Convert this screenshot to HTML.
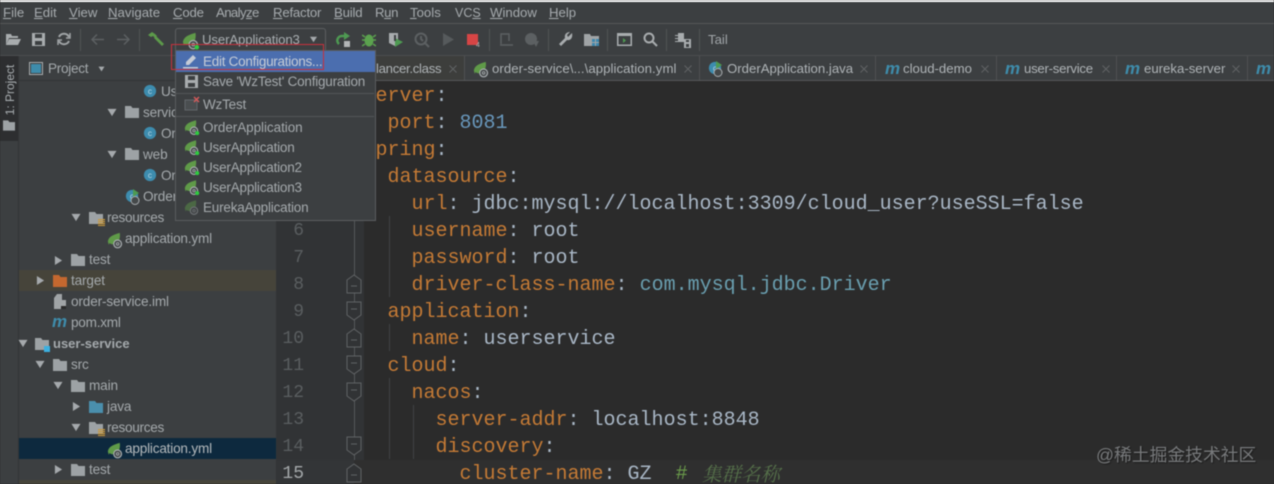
<!DOCTYPE html>
<html><head><meta charset="utf-8">
<style>
html,body{margin:0;padding:0;background:#2b2b2b}
#p{position:relative;width:1274px;height:484px;overflow:hidden;background:#2b2b2b;font-family:"Liberation Sans","Noto Sans CJK SC",sans-serif;font-size:13.5px;color:#a9b1b6;filter:blur(.45px)}
#p div,#p svg{position:absolute}
.t{white-space:nowrap;line-height:20px;height:20px}
.m{font-size:13.2px;color:#a6abae;top:3px}
.m u{text-decoration:underline;text-underline-offset:1px}
.tab{font-size:13.2px;color:#aeb3b6;top:59px}
.r{font-size:13.6px;color:#a4a9ac;margin-top:1px;letter-spacing:-.15px}
.d{font-size:13.5px;color:#a4a9ac;margin-top:1px;letter-spacing:-.2px}
.c{font-family:"Liberation Mono","Noto Sans CJK SC",monospace;font-size:20px;line-height:27px;height:27px;white-space:pre;color:#c47a35;left:363.5px;margin-top:2px}
.c b{font-weight:400;color:#a9b7c6}
.n{font-family:"Liberation Mono",monospace;font-size:18px;line-height:27px;height:27px;color:#5a5e60;text-align:right;width:28px;left:276px;margin-top:2px}
.v{background:#3f4244;width:1px}
.sep{background:#515354;width:1px;top:29px;height:22px}
.ln{background:#535557;height:1px}
</style></head><body>
<div id="p">
<svg width="0" height="0" style="left:0;top:0"><defs>
<symbol id="sp" viewBox="0 0 20 20"><path d="M1 11C2 5 8 3 15 1c1 6-1 12-6 13-3 1-5 0-6-1l-1 2z" fill="#5f9a48"/><circle cx="12.5" cy="14" r="4.6" fill="#45494a" stroke="#a8adb0" stroke-width="1.4"/><circle cx="12.5" cy="14" r="1.5" fill="none" stroke="#a8adb0" stroke-width="1"/></symbol>
<symbol id="spg" viewBox="0 0 20 20"><use href="#sp" width="20" height="20"/><circle cx="16.5" cy="17" r="2.5" fill="#2ecb3f"/></symbol>
<symbol id="f" viewBox="0 0 14 12"><path d="M0 0h6l1.500 2H14v10H0z" fill="#9da2a5"/></symbol>
<symbol id="cl" viewBox="0 0 16 16"><circle cx="8" cy="8" r="7" fill="#3d8cae"/><text x="8" y="11.500" font-size="9.500" text-anchor="middle" fill="#b4d4e4" font-family="Liberation Sans">c</text></symbol>
<symbol id="mv" viewBox="0 0 16 12"><text x="0" y="11" font-size="17" font-style="italic" font-weight="700" fill="#3e8cab" font-family="Liberation Sans">m</text></symbol>
<symbol id="dn" viewBox="0 0 10 10"><path d="M0 1h10L5 9z" fill="#a5a9ac"/></symbol>
<symbol id="rt" viewBox="0 0 10 10"><path d="M1 0v10l8-5z" fill="#a5a9ac"/></symbol>
<symbol id="x" viewBox="0 0 8 8"><path d="M.5.500l7 7M7.500.500l-7 7" stroke="#606365" stroke-width="1" fill="none"/></symbol>
</defs></svg>

<!-- chrome -->
<div style="left:0;top:0;width:1274px;height:2px;background:#fff"></div>
<div style="left:0;top:2px;width:1274px;height:21px;background:#3c3f41"></div>
<div style="left:0;top:23px;width:1274px;height:1px;background:#555758"></div>
<div style="left:0;top:24px;width:1274px;height:32px;background:#3c3f41"></div>
<div style="left:0;top:55px;width:1274px;height:1px;background:#4b4d4f"></div>
<div style="left:0;top:56px;width:1274px;height:24px;background:#3c3f41"></div>
<div style="left:276px;top:80px;width:998px;height:1px;background:#555758"></div>

<!-- menu -->
<div class="t m" style="left:3px"><u>F</u>ile</div>
<div class="t m" style="left:34px"><u>E</u>dit</div>
<div class="t m" style="left:69px"><u>V</u>iew</div>
<div class="t m" style="left:108px"><u>N</u>avigate</div>
<div class="t m" style="left:173px;letter-spacing:-.2px"><u>C</u>ode</div>
<div class="t m" style="left:216px;letter-spacing:-.6px">Analy<u>z</u>e</div>
<div class="t m" style="left:273px;letter-spacing:-.2px"><u>R</u>efactor</div>
<div class="t m" style="left:334px;letter-spacing:-.2px"><u>B</u>uild</div>
<div class="t m" style="left:375px;letter-spacing:-.4px">R<u>u</u>n</div>
<div class="t m" style="left:410px"><u>T</u>ools</div>
<div class="t m" style="left:455px;font-size:12.5px">VC<u>S</u></div>
<div class="t m" style="left:490px"><u>W</u>indow</div>
<div class="t m" style="left:549px"><u>H</u>elp</div>

<!-- toolbar -->
<svg style="left:5px;top:33px" width="16" height="13" viewBox="0 0 16 13"><path d="M1 1h5l1 2h6v2H4L1 12zM4 6h12l-3 6H1z" fill="#a8acae"/></svg>
<svg style="left:32px;top:33px" width="13" height="13" viewBox="0 0 13 13"><path d="M0 0h13v13H0z" fill="#a8acae"/><path d="M3 1h7v4H3zM3 8h7v4H3z" fill="#3c3f41"/></svg>
<svg style="left:57px;top:32px" width="14" height="14" viewBox="0 0 14 14" fill="none" stroke="#a0a4a6" stroke-width="2"><path d="M12 5A5.500 5.500 0 0 0 2 5M2 9a5.500 5.500 0 0 0 10 0"/><path d="M13 1v5H9M1 13V8h4" stroke-width="1.500"/></svg>
<div class="sep" style="left:80px"></div>
<svg style="left:90px;top:33px" width="14" height="13" viewBox="0 0 14 13" fill="none" stroke="#5c6062" stroke-width="1.500"><path d="M14 6.500H2M7 1.500l-5 5 5 5"/></svg>
<svg style="left:117px;top:33px" width="14" height="13" viewBox="0 0 14 13" fill="none" stroke="#5c6062" stroke-width="1.500"><path d="M0 6.500h12M7 1.500l5 5-5 5"/></svg>
<div class="sep" style="left:139px"></div>
<svg style="left:148px;top:31px" width="16" height="16" viewBox="0 0 16 16"><path d="M0 4l4-3 3 2 2 2-2 2-2-2-2 1zM6 7l2-2 8 8-2 2z" fill="#5c9a4a"/></svg>
<div style="left:175px;top:28px;width:149px;height:22px;border:1px solid #5c5e60;border-radius:3px"></div>
<svg style="left:182px;top:32px" width="18" height="18"><use href="#spg" width="18" height="18"/></svg>
<div class="t" style="left:202px;top:30px;font-size:13.2px;color:#a8adb0;letter-spacing:-.12px">UserApplication3</div>
<svg style="left:309px;top:36px" width="9" height="7"><use href="#dn" width="9" height="7"/></svg>
<svg style="left:336px;top:32px" width="15" height="16" viewBox="0 0 15 16" fill="none"><path d="M8 4H6a4.500 4.500 0 0 0-3 8" stroke="#4e9a52" stroke-width="2.500"/><path d="M8 0l6 4-6 4z" fill="#4e9a52"/><path d="M8 9h6v6H8z" fill="#b2b5b7"/></svg>
<svg style="left:362px;top:32px" width="14" height="15" viewBox="0 0 14 15" fill="#5ba24e"><ellipse cx="7" cy="8.500" rx="4.500" ry="6"/><path d="M0 3l3 2M14 3l-3 2M0 8h3M14 8h-3M0 14l3-2M14 14l-3-2" stroke="#5ba24e" stroke-width="1.500"/></svg>
<svg style="left:388px;top:32px" width="16" height="16" viewBox="0 0 16 16"><path d="M1 1h9v8l-3 5-6-3z" fill="#a8acae"/><path d="M7 6l8 4-8 5z" fill="#4e9a52"/><path d="M6 3h2v6H6z" fill="#3c3f41"/></svg>
<svg style="left:414px;top:32px" width="16" height="16" viewBox="0 0 16 16" fill="none" stroke="#5c6062" stroke-width="2"><circle cx="7" cy="7" r="5.500"/><path d="M7 4v3l2 2M10 10l5 5"/></svg>
<svg style="left:443px;top:33px" width="11" height="13"><path d="M0 0v13l11-6.500z" fill="#565a5c"/></svg>
<svg style="left:467px;top:33px" width="13" height="15"><path d="M0 1h11v11H0z" fill="#d64545"/><text x="9" y="14" font-size="7" fill="#b0b3b5" font-family="Liberation Sans">4</text></svg>
<div class="sep" style="left:489px"></div>
<svg style="left:499px;top:33px" width="15" height="14" fill="none" stroke="#5c6062" stroke-width="1.500"><path d="M2 11V1h8v7M1 12h13"/></svg>
<svg style="left:524px;top:32px" width="16" height="16"><circle cx="7" cy="7" r="6" fill="#5c6062"/><path d="M9 9h6l-3 6z" fill="#5c6062"/></svg>
<div class="sep" style="left:548px"></div>
<svg style="left:558px;top:32px" width="15" height="15" viewBox="0 0 15 15"><path d="M14 1l-4 4-1-2 3-3C9 0 6 2 7 6L1 12l2 2 6-6c4 1 6-3 5-7z" fill="#a8acae"/></svg>
<svg style="left:584px;top:34px" width="15" height="12" viewBox="0 0 15 12"><path d="M0 0h6l1 2h8v10H0z" fill="#a0a4a6"/><path d="M8 5h3v3H8zM12 5h3v3h-3zM8 9h3v3H8zM12 9h3v3h-3z" fill="#3d87ad"/></svg>
<div class="sep" style="left:607px"></div>
<svg style="left:617px;top:33px" width="15" height="13" fill="none"><path d="M.75.75h13.500v11.500H.75z" stroke="#a8acae" stroke-width="1.500"/><path d="M1 1h13v2H1z" fill="#a8acae"/><path d="M6 5l3 2.500L6 10z" fill="#4e9a52"/></svg>
<svg style="left:643px;top:32px" width="15" height="15" fill="none" stroke="#a8acae" stroke-width="2"><circle cx="6" cy="6" r="4.500"/><path d="M9.500 9.500L14 14"/></svg>
<div class="sep" style="left:666px"></div>
<svg style="left:675px;top:33px" width="17" height="15" viewBox="0 0 17 15"><path d="M3 0h6v9H3zM0 2h3v1H0zM0 5h3v1H0zM0 8h3v1H0z" fill="#a8acae"/><path d="M9 6h7v9H9z" fill="#a8acae"/><path d="M11 7h3v2h-3zM11 11h3v3h-3z" fill="#3c3f41"/></svg>
<div class="sep" style="left:699px"></div>
<div class="t" style="left:708px;top:30px;font-size:13.2px;color:#a0a5a8">Tail</div>

<!-- tabs -->
<div class="v" style="left:464px;top:56px;height:24px;background:#4f5153"></div>
<div style="left:375px;top:56px;width:89px;height:24px;background:#3d3e3c"></div>
<div class="t tab" style="left:376px;letter-spacing:-.3px">lancer.class</div>
<svg style="left:449px;top:65px" width="8" height="8"><use href="#x" width="8" height="8"/></svg>
<svg style="left:473px;top:61px" width="17" height="17"><use href="#sp" width="17" height="17"/></svg>
<div class="t tab" style="left:492px;letter-spacing:.06px">order-service\...\application.yml</div>
<svg style="left:684px;top:65px" width="8" height="8"><use href="#x" width="8" height="8"/></svg>
<div class="v" style="left:699px;top:56px;height:24px;background:#4f5153"></div>
<svg style="left:708px;top:61px" width="16" height="16" viewBox="0 0 16 16"><use href="#cl" width="14" height="14"/><path d="M8 0l6 4-6 4z" fill="#4e9a52"/><circle cx="10" cy="11.500" r="4" fill="#45494a" stroke="#a8adb0"/></svg>
<div class="t tab" style="left:727px">OrderApplication.java</div>
<svg style="left:860px;top:65px" width="8" height="8"><use href="#x" width="8" height="8"/></svg>
<div class="v" style="left:875px;top:56px;height:24px;background:#4f5153"></div>
<svg style="left:885px;top:63px" width="16" height="12"><use href="#mv" width="16" height="12"/></svg>
<div class="t tab" style="left:903px">cloud-demo</div>
<svg style="left:981px;top:65px" width="8" height="8"><use href="#x" width="8" height="8"/></svg>
<div class="v" style="left:996px;top:56px;height:24px;background:#4f5153"></div>
<svg style="left:1005px;top:63px" width="16" height="12"><use href="#mv" width="16" height="12"/></svg>
<div class="t tab" style="left:1024px;letter-spacing:-.25px">user-service</div>
<svg style="left:1102px;top:65px" width="8" height="8"><use href="#x" width="8" height="8"/></svg>
<div class="v" style="left:1116px;top:56px;height:24px;background:#4f5153"></div>
<svg style="left:1125px;top:63px" width="16" height="12"><use href="#mv" width="16" height="12"/></svg>
<div class="t tab" style="left:1144px">eureka-server</div>
<svg style="left:1232px;top:65px" width="8" height="8"><use href="#x" width="8" height="8"/></svg>
<div class="v" style="left:1247px;top:56px;height:24px;background:#4f5153"></div>
<svg style="left:1256px;top:63px" width="16" height="12"><use href="#mv" width="16" height="12"/></svg>

<!-- left stripe -->
<div style="left:0;top:56px;width:19px;height:428px;background:#3c3f41"></div>
<div style="left:0;top:56px;width:18px;height:85px;background:#2d2e30"></div>
<div class="t" style="left:-16px;top:80px;width:52px;font-size:12px;color:#a8adb0;transform:rotate(-90deg);text-align:center">1: Project</div>
<svg style="left:3px;top:120px" width="12" height="11"><use href="#f" width="12" height="11"/></svg>
<div style="left:18px;top:56px;width:1px;height:428px;background:#323436"></div>

<!-- project tree -->
<div style="left:19px;top:56px;width:257px;height:428px;background:#3c3f41"></div>
<div style="left:19px;top:80px;width:257px;height:1px;background:#323436"></div>
<svg style="left:29px;top:62px" width="14" height="13" fill="none"><path d="M.5.500h13v12H.5z" stroke="#a8acae"/><path d="M2 2h10v9H2z" fill="#3e8cab"/></svg>
<div class="t r" style="left:48px;top:58px;letter-spacing:-.3px">Project</div>
<svg style="left:97px;top:66px" width="9" height="6"><use href="#dn" width="9" height="6"/></svg>
<div style="left:19px;top:270px;width:257px;height:21px;background:#46443a"></div>
<div style="left:19px;top:438px;width:257px;height:21px;background:#0d293e"></div>
<div style="left:19px;top:480px;width:257px;height:4px;background:#46443a"></div>

<svg style="left:143px;top:84px" width="14" height="14"><use href="#cl" width="14" height="14"/></svg>
<div class="t r" style="left:161px;top:81px">Us</div>
<svg style="left:107px;top:108px" width="10" height="9"><use href="#dn" width="10" height="9"/></svg>
<svg style="left:125px;top:106px" width="14" height="12"><use href="#f" width="14" height="12"/></svg>
<div class="t r" style="left:143px;top:102px">service</div>
<svg style="left:143px;top:126px" width="14" height="14"><use href="#cl" width="14" height="14"/></svg>
<div class="t r" style="left:161px;top:123px">Or</div>
<svg style="left:107px;top:150px" width="10" height="9"><use href="#dn" width="10" height="9"/></svg>
<svg style="left:125px;top:148px" width="14" height="12"><use href="#f" width="14" height="12"/></svg>
<div class="t r" style="left:143px;top:144px">web</div>
<svg style="left:143px;top:168px" width="14" height="14"><use href="#cl" width="14" height="14"/></svg>
<div class="t r" style="left:161px;top:165px">Or</div>
<svg style="left:125px;top:189px" width="16" height="16" viewBox="0 0 16 16"><use href="#cl" width="14" height="14"/><path d="M8 0l6 4-6 4z" fill="#4e9a52"/><circle cx="10" cy="11.500" r="4" fill="#45494a" stroke="#a8adb0"/></svg>
<div class="t r" style="left:143px;top:186px">Order</div>
<svg style="left:71px;top:213px" width="10" height="9"><use href="#dn" width="10" height="9"/></svg>
<svg style="left:89px;top:212px" width="14" height="12"><use href="#f" width="14" height="12"/></svg>
<svg style="left:98px;top:219px" width="7" height="7"><path d="M0 0h7v1.200H0zM0 2h7v1.200H0zM0 4h7v1.200H0zM0 6h7v1H0z" fill="#c99a3e"/></svg>
<div class="t r" style="left:107px;top:207px;letter-spacing:-.3px">resources</div>
<svg style="left:107px;top:232px" width="17" height="17"><use href="#sp" width="17" height="17"/></svg>
<div class="t r" style="left:125px;top:228px;letter-spacing:-.2px">application.yml</div>
<svg style="left:54px;top:256px" width="9" height="9"><use href="#rt" width="9" height="9"/></svg>
<svg style="left:71px;top:254px" width="14" height="12"><use href="#f" width="14" height="12"/></svg>
<div class="t r" style="left:89px;top:249px">test</div>
<svg style="left:36px;top:276px" width="9" height="9"><use href="#rt" width="9" height="9"/></svg>
<svg style="left:53px;top:275px" width="14" height="12" viewBox="0 0 14 12"><path d="M0 0h6l1.500 2H14v10H0z" fill="#c4682f"/></svg>
<div class="t r" style="left:71px;top:270px">target</div>
<svg style="left:54px;top:294px" width="12" height="15"><path d="M3 0h5v6h4v9H0V4z" fill="#a0a4a6"/><path d="M7 12h5v3H7z" fill="#2b2b2b"/></svg>
<div class="t r" style="left:71px;top:291px">order-service.iml</div>
<svg style="left:52px;top:316px" width="16" height="12"><use href="#mv" width="16" height="12"/></svg>
<div class="t r" style="left:71px;top:312px;letter-spacing:-.25px">pom.xml</div>
<svg style="left:18px;top:339px" width="10" height="9"><use href="#dn" width="10" height="9"/></svg>
<svg style="left:35px;top:338px" width="14" height="12"><use href="#f" width="14" height="12"/></svg>
<div style="left:44px;top:346px;width:6px;height:6px;background:#3cb0e0"></div>
<div class="t r" style="left:53px;top:333px;font-weight:700;font-size:13px;letter-spacing:0">user-service</div>
<svg style="left:35px;top:360px" width="10" height="9"><use href="#dn" width="10" height="9"/></svg>
<svg style="left:53px;top:359px" width="14" height="12"><use href="#f" width="14" height="12"/></svg>
<div class="t r" style="left:71px;top:354px">src</div>
<svg style="left:53px;top:381px" width="10" height="9"><use href="#dn" width="10" height="9"/></svg>
<svg style="left:71px;top:380px" width="14" height="12"><use href="#f" width="14" height="12"/></svg>
<div class="t r" style="left:89px;top:375px">main</div>
<svg style="left:72px;top:402px" width="9" height="9"><use href="#rt" width="9" height="9"/></svg>
<svg style="left:89px;top:401px" width="14" height="12" viewBox="0 0 14 12"><path d="M0 0h6l1.500 2H14v10H0z" fill="#4a8fad"/></svg>
<div class="t r" style="left:107px;top:396px">java</div>
<svg style="left:71px;top:423px" width="10" height="9"><use href="#dn" width="10" height="9"/></svg>
<svg style="left:89px;top:422px" width="14" height="12"><use href="#f" width="14" height="12"/></svg>
<svg style="left:98px;top:429px" width="7" height="7"><path d="M0 0h7v1.200H0zM0 2h7v1.200H0zM0 4h7v1.200H0zM0 6h7v1H0z" fill="#c99a3e"/></svg>
<div class="t r" style="left:107px;top:417px;letter-spacing:-.3px">resources</div>
<svg style="left:107px;top:442px" width="17" height="17"><use href="#sp" width="17" height="17"/></svg>
<div class="t r" style="left:125px;top:438px;color:#b4b9bc;letter-spacing:-.2px">application.yml</div>
<svg style="left:54px;top:465px" width="9" height="9"><use href="#rt" width="9" height="9"/></svg>
<svg style="left:71px;top:464px" width="14" height="12"><use href="#f" width="14" height="12"/></svg>
<div class="t r" style="left:89px;top:459px">test</div>

<!-- gutter -->
<div style="left:276px;top:81px;width:88px;height:403px;background:#313335"></div>
<div style="left:276px;top:81px;width:1px;height:403px;background:#323436"></div>
<div style="left:354px;top:81px;width:1px;height:403px;background:#55585a"></div>
<div style="left:277px;top:460px;width:997px;height:24px;background:#2f2f2f"></div>
<div style="left:277px;top:460px;width:77px;height:24px;background:#333537"></div>
<div class="n" style="top:216px">6</div>
<div class="n" style="top:243px">7</div>
<div class="n" style="top:270px">8</div>
<div class="n" style="top:297px">9</div>
<div class="n" style="top:324px">10</div>
<div class="n" style="top:351px">11</div>
<div class="n" style="top:378px">12</div>
<div class="n" style="top:405px">13</div>
<div class="n" style="top:432px">14</div>
<div class="n" style="top:459px;color:#a4a8aa">15</div>

<svg style="left:346px;top:220px" width="16" height="264" viewBox="0 0 16 264" fill="#313335" stroke="#606365" stroke-width="1">
<path d="M1 60l7-5 7 5v13H1z"/><path d="M5 66h6"/>
<path d="M1 82h14v13l-7 5-7-5z"/><path d="M5 89h6"/>
<path d="M1 114l7-5 7 5v13H1z"/><path d="M5 120h6"/>
<path d="M1 136h14v13l-7 5-7-5z"/><path d="M5 143h6"/>
<path d="M1 163h14v13l-7 5-7-5z"/><path d="M5 170h6"/>
<path d="M1 217h14v13l-7 5-7-5z"/><path d="M5 224h6"/>
<path d="M1 249l7-5 7 5v13H1z"/><path d="M5 255h6"/>
</svg>

<!-- indent guides -->
<div class="v" style="left:389px;top:216px;height:81px"></div>
<div class="v" style="left:389px;top:324px;height:27px"></div>
<div class="v" style="left:389px;top:378px;height:81px"></div>
<div class="v" style="left:413px;top:405px;height:54px"></div>

<!-- code -->
<div class="c" style="top:81px">server<b>:</b></div>
<div class="c" style="top:108px">  port<b>:</b> <b style="color:#6897bb">8081</b></div>
<div class="c" style="top:135px">spring<b>:</b></div>
<div class="c" style="top:162px">  datasource<b>:</b></div>
<div class="c" style="top:189px">    url<b>: jdbc:mysql://localhost:3309/cloud_user?useSSL=false</b></div>
<div class="c" style="top:216px">    username<b>: root</b></div>
<div class="c" style="top:243px">    password<b>: root</b></div>
<div class="c" style="top:270px">    driver-class-name<b>: </b><b style="color:#6a9fb0">com.mysql.jdbc.Driver</b></div>
<div class="c" style="top:297px">  application<b>:</b></div>
<div class="c" style="top:324px">    name<b>: userservice</b></div>
<div class="c" style="top:351px">  cloud<b>:</b></div>
<div class="c" style="top:378px">    nacos<b>:</b></div>
<div class="c" style="top:405px">      server-addr<b>: localhost:8848</b></div>
<div class="c" style="top:432px">      discovery<b>:</b></div>
<div class="c" style="top:459px">        cluster-name<b>: GZ  </b><i style="color:#6a9a4a;font-style:normal">#</i></div>
<div class="t" style="left:702px;top:463px;font-family:'Noto Serif CJK SC',serif;font-style:italic;font-size:19.5px;line-height:20px;color:#55704a">集群名称</div>

<!-- popup -->
<div style="left:175px;top:50px;width:199px;height:169px;background:#3c3f41;border:1px solid #5a5c5e"></div>
<div style="left:176px;top:51px;width:199px;height:21px;background:#4b6eaf"></div>
<svg style="left:183px;top:54px" width="16" height="15" viewBox="0 0 16 15"><path d="M3 8l7-7 3 3-7 7H3z" fill="#c5cbd6"/><path d="M0 13h15v1.500H0z" fill="#c5cbd6"/></svg>
<div class="t d" style="left:203px;top:51px;color:#c6ccd6;letter-spacing:-.27px">Edit Configurations...</div>
<svg style="left:185px;top:75px" width="13" height="13"><path d="M0 0h13v13H0z" fill="#a8acae"/><path d="M3 1h7v4H3zM3 8h7v4H3z" fill="#3c3f41"/></svg>
<div class="t d" style="left:203px;top:71px;letter-spacing:-.22px">Save 'WzTest' Configuration</div>
<div class="ln" style="left:176px;top:93px;width:198px"></div>
<svg style="left:184px;top:96px" width="16" height="16" viewBox="0 0 16 16"><path d="M1 4h12v10H1z" fill="#4a4e50" stroke="#62666a"/><path d="M10 1l5 5M15 1l-5 5" stroke="#d05a5a" stroke-width="1.500"/></svg>
<div class="t d" style="left:203px;top:94px">WzTest</div>
<div class="ln" style="left:176px;top:116px;width:198px"></div>
<svg style="left:184px;top:119px" width="16" height="17"><use href="#spg" width="16" height="17"/></svg>
<div class="t d" style="left:203px;top:117px;letter-spacing:-.06px">OrderApplication</div>
<svg style="left:184px;top:139px" width="16" height="17"><use href="#spg" width="16" height="17"/></svg>
<div class="t d" style="left:203px;top:137px">UserApplication</div>
<svg style="left:184px;top:159px" width="16" height="17"><use href="#spg" width="16" height="17"/></svg>
<div class="t d" style="left:203px;top:157px">UserApplication2</div>
<svg style="left:184px;top:179px" width="16" height="17"><use href="#spg" width="16" height="17"/></svg>
<div class="t d" style="left:203px;top:177px">UserApplication3</div>
<svg style="left:184px;top:199px;opacity:.45" width="16" height="17"><use href="#sp" width="16" height="17"/></svg>
<div class="t d" style="left:203px;top:197px">EurekaApplication</div>

<!-- red annotation -->
<div style="left:171px;top:44px;width:151px;height:24px;border:1px solid #c8303c"></div>

<!-- watermark -->
<div class="t" style="left:1096px;top:445px;font-size:17.800px;color:#77797b;text-shadow:1px 1px 1px #1c1c1c">@稀土掘金技术社区</div>
</div>
</body></html>
